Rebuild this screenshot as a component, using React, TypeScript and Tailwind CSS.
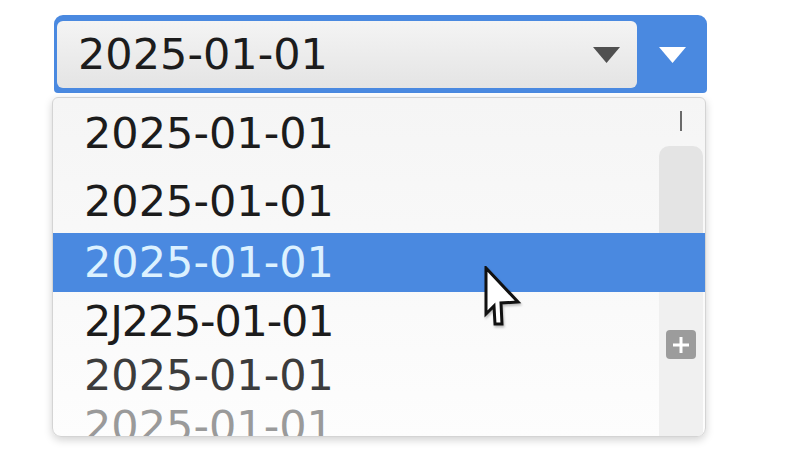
const rows = [
  { label: '2025-01-01', h: 'h-[71px]', tone: 'text-[#1c1c1c]' },
  { label: '2025-01-01', h: 'h-[64px]', tone: 'text-[#1c1c1c]' },
  { label: '2025-01-01', h: 'h-[59px]', tone: 'text-[#dcf1ff]', selected: true },
  { label: '2J225-01-01', h: 'h-[58px]', tone: 'text-[#1c1c1c] tracking-[-1.2px]' },
  { label: '2025-01-01', h: 'h-[51px]', tone: 'text-[#3c3c3c]' },
  { label: '2025-01-01', h: 'h-[50px]', tone: 'text-[#9a9a9a]' },
]

function Caret({ color }: { color: string }) {
  return (
    <svg width="29" height="18" viewBox="0 0 29 18">
      <path d="M1 1 H28 L14.5 17 Z" fill={color} />
    </svg>
  )
}

function Pointer() {
  return (
    <svg width="40" height="62" viewBox="0 0 40 62" className="drop-shadow-[1px_2px_1px_rgba(0,0,0,0.25)]">
      <path
        d="M3 2 L3 48 L11 40 L12 58 L19 58 L18 37 L35 36 Z"
        fill="#ffffff"
        stroke="#111111"
        strokeWidth="3"
        strokeLinejoin="miter"
      />
    </svg>
  )
}

export default function App() {
  return (
    <div className="min-h-screen bg-white pl-[54px] pt-[15px] font-['DejaVu_Sans',sans-serif]">
      <div className="w-[653px]">
        {/* combo header */}
        <div className="flex h-[78px] rounded-t-[9px] rounded-b-[4px] bg-[#4a89e0] pl-[3px] pt-[6px] pb-[5px]">
          <div className="flex flex-1 items-center rounded-[6px] bg-gradient-to-b from-[#f4f4f4] to-[#e4e4e4] pl-[21px] pr-[16px]">
            <span className="flex-1 text-[43px] leading-none text-[#1c1c1c]">2025-01-01</span>
            <Caret color="#505050" />
          </div>
          <div className="flex w-[70px] items-center justify-center">
            <Caret color="#ffffff" />
          </div>
        </div>

        {/* dropdown list */}
        <div className="relative -ml-[2px] mt-[4px] h-[340px] w-[654px] overflow-hidden rounded-t-[6px] rounded-b-[9px] border border-[#d4d4d4] bg-gradient-to-b from-[#f5f5f5] to-[#fdfdfd] shadow-[0_3px_8px_rgba(0,0,0,0.18)]">
          <div className="absolute right-[2px] top-0 flex h-full w-[44px] flex-col items-center">
            <div className="mt-[13px] h-[20px] w-[2px] bg-[#6a6a6a]" />
            <div className="mt-[15px] h-[90px] w-full rounded-t-[10px] bg-[#e4e4e4]" />
            <div className="flex w-full flex-1 flex-col items-center bg-[#f0f0f0] pt-[94px]">
              <div className="flex h-[29px] w-[30px] items-center justify-center rounded-[4px] bg-[#9c9c9c]">
                <svg width="18" height="18" viewBox="0 0 18 18">
                  <path d="M9 1 V17 M1 9 H17" stroke="#ffffff" strokeWidth="3" />
                </svg>
              </div>
            </div>
          </div>

          <div className="relative flex flex-col">
            {rows.map((r, i) => (
              <div
                key={i}
                className={`flex shrink-0 items-center pl-[31px] text-[43px] leading-none ${r.h} ${r.tone} ${r.selected ? 'bg-[#4a89e0]' : ''}`}
              >
                {r.label}
              </div>
            ))}
          </div>

          <div className="absolute left-[430px] top-[168px]">
            <Pointer />
          </div>
        </div>
      </div>
    </div>
  )
}
